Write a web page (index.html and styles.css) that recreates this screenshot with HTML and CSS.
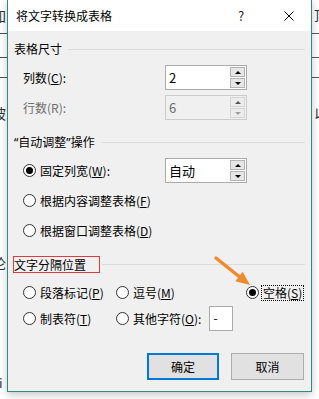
FILE: index.html
```html
<!DOCTYPE html>
<html lang="zh-CN">
<head>
    <meta charset="UTF-8">
    <meta name="viewport" content="width=device-width, initial-scale=1.0">
    <title>将文字转换成表格</title>
    <link rel="stylesheet" href="styles.css">
</head>
<body>
    <!-- document behind the dialog -->
    <div class="doc">
        <div class="doc-line doc-text first"><span class="cut-left">加</span><span class="cut-right">顶</span></div>
        <div class="doc-rule r1"></div>
        <div class="doc-rule r2"></div>
        <div class="doc-rule r3"></div>
        <div class="doc-line doc-text t2"><span class="cut-left">坡</span><span class="cut-right">以</span></div>
        <div class="doc-line doc-text t3"><span class="cut-left">论</span></div>
        <div class="doc-line doc-text t4"><span class="cut-small">i</span></div>
    </div>

    <div class="dialog">
        <div class="titlebar">
            <span class="title">将文字转换成表格</span>
            <span class="help">?</span>
            <svg class="close" width="10" height="10" viewBox="0 0 10 10">
                <path d="M0.5 0.5 L9.5 9.5 M9.5 0.5 L0.5 9.5" stroke="#000" stroke-width="1" fill="none"/>
            </svg>
        </div>

        <div class="content">
            <div class="legend s1">
                <span class="legend-text">表格尺寸</span>
                <span class="legend-line"></span>
            </div>
            <div class="row first">
                <span class="label">列数(<u>C</u>):</span>
                <div class="spin">
                    <span class="spin-value">2</span>
                    <div class="spin-buttons">
                        <span class="spin-btn up"></span>
                        <span class="spin-btn down"></span>
                    </div>
                </div>
            </div>
            <div class="row">
                <span class="label disabled">行数(R):</span>
                <div class="spin is-disabled">
                    <span class="spin-value">6</span>
                    <div class="spin-buttons">
                        <span class="spin-btn up"></span>
                        <span class="spin-btn down"></span>
                    </div>
                </div>
            </div>

            <div class="legend s2">
                <span class="legend-text"><span class="q">“</span>自动调整<span class="q">”</span>操作</span>
                <span class="legend-line"></span>
            </div>
            <div class="row first">
                <span class="label"><span class="radio on"></span>固定列宽(<u>W</u>):</span>
                <div class="spin">
                    <span class="spin-value">自动</span>
                    <div class="spin-buttons">
                        <span class="spin-btn up"></span>
                        <span class="spin-btn down"></span>
                    </div>
                </div>
            </div>
            <div class="row">
                <span class="label"><span class="radio"></span>根据内容调整表格(<u>F</u>)</span>
            </div>
            <div class="row">
                <span class="label"><span class="radio"></span>根据窗口调整表格(<u>D</u>)</span>
            </div>

            <div class="legend s3">
                <span class="legend-text marked">文字分隔位置</span>
                <span class="legend-line"></span>
            </div>
            <div class="row opts first">
                <span class="opt c1"><span class="radio"></span>段落标记(<u>P</u>)</span>
                <span class="opt c2"><span class="radio"></span>逗号(<u>M</u>)</span>
                <span class="opt c3"><span class="radio on"></span><span class="focus">空格(<u>S</u>)</span></span>
            </div>
            <div class="row opts tight">
                <span class="opt c1"><span class="radio"></span>制表符(<u>T</u>)</span>
                <span class="opt c2"><span class="radio"></span>其他字符(<u>O</u>):<span class="char-box">-</span></span>
            </div>

            <div class="buttons">
                <button class="btn default">确定</button>
                <button class="btn">取消</button>
            </div>
        </div>

        <svg class="arrow" width="50" height="40" viewBox="0 0 50 40">
            <line x1="10" y1="7" x2="33" y2="25.5" stroke="#f08a2e" stroke-width="3.5" stroke-linecap="round"/>
            <polygon points="44,34 29.3,30.2 36.7,20.8" fill="#f08a2e"/>
        </svg>
    </div>
</body>
</html>
```

FILE: styles.css
```css
body {
    margin: 0;
    width: 319px;
    height: 399px;
    overflow: hidden;
    position: relative;
    background: #fff;
    font-family: "Noto Sans CJK SC", "Microsoft YaHei", sans-serif;
    font-size: 12px;
    color: #000;
}

/* background document */
.doc {
    height: 399px;
    color: #333;
    font-size: 14px;
}

.doc-line {
    display: flex;
    justify-content: space-between;
    height: 18px;
    line-height: 18px;
}

.doc-text.first {
    padding-top: 6px;
}

.cut-left {
    margin-left: -8px;
}

.cut-right {
    margin-right: -9px;
}

.cut-small {
    margin-left: -1px;
    font-size: 13px;
}

.doc-rule {
    height: 1px;
    background: #555;
}

.doc-rule.r1 { margin-top: 9px; }
.doc-rule.r2 { margin-top: 23px; }
.doc-rule.r3 { margin-top: 19px; }
.doc-line.t2 { margin-top: 26px; }
.doc-line.t3 { margin-top: 132px; }
.doc-line.t4 { margin-top: 102px; }

/* dialog */
.dialog {
    position: absolute;
    left: 7px;
    top: -1px;
    width: 303px;
    height: 391px;
    border: 1px solid #2e8b7a;
    background: #f0f0f0;
    box-shadow: 0 3px 8px rgba(0, 0, 0, 0.22);
}

.titlebar {
    height: 31px;
    background: #fff;
    display: flex;
    align-items: center;
    padding-left: 8px;
}

.title {
    flex: 1;
}

.help {
    width: 10px;
    margin-right: 38px;
    font-size: 13px;
    text-align: center;
    color: #222;
}

.close {
    margin-right: 17px;
}

.content {
    padding: 0 6px;
}

.legend {
    display: flex;
    align-items: center;
    height: 16px;
    line-height: 16px;
}

.legend.s1 { margin-top: 10px; }
.legend.s2 { margin-top: 14px; }
.legend.s3 { margin-top: 13px; height: 17px; }

.legend-text {
    white-space: nowrap;
    margin-right: 6px;
}

.q {
    font-family: "Noto Sans", sans-serif;
}

.legend-text.marked {
    margin-left: -1px;
    padding-right: 13px;
    border: 1px solid #e0393e;
    line-height: 15px;
    margin-right: 2px;
}

.legend-line {
    flex: 1;
    height: 1px;
    background: #dcdcdc;
}

.row {
    display: flex;
    align-items: center;
    height: 25px;
    margin-top: 5px;
    padding-left: 9px;
}

.row.first {
    margin-top: 8px;
}

.s3 + .row.first {
    margin-top: 7px;
}

.row.tight {
    margin-top: 1px;
}

.label {
    width: 142px;
    display: flex;
    align-items: center;
    white-space: nowrap;
}

.label.disabled {
    color: #6d6d6d;
}

.radio {
    position: relative;
    width: 11px;
    height: 11px;
    border: 1px solid #333;
    border-radius: 50%;
    background: #fff;
    margin-right: 4px;
    flex: none;
}

.radio.on::after {
    content: "";
    position: absolute;
    left: 2px;
    top: 2px;
    width: 7px;
    height: 7px;
    border-radius: 50%;
    background: #000;
}

/* spin box */
.spin {
    width: 80px;
    height: 23px;
    border: 1px solid #ababab;
    background: #fff;
    display: flex;
    align-items: center;
}

.spin-value {
    flex: 1;
    padding-left: 3px;
    font-size: 13px;
}

.spin-buttons {
    width: 15px;
    height: 21px;
    margin-right: 1px;
    display: flex;
    flex-direction: column;
    gap: 1px;
}

.spin-btn {
    flex: 1;
    position: relative;
    border: 1px solid #b4b4b4;
    background: #e6e6e6;
}

.spin-btn::after {
    content: "";
    position: absolute;
    left: 4px;
    top: 3px;
    border-left: 3px solid transparent;
    border-right: 3px solid transparent;
}

.spin-btn.up::after {
    border-bottom: 3px solid #000;
}

.spin-btn.down::after {
    border-top: 3px solid #000;
}

.spin.is-disabled {
    border-color: #cccccc;
    background: #f0f0f0;
    color: #6d6d6d;
}

.spin.is-disabled .spin-btn {
    border-color: #d4d4d4;
    background: #ececec;
}

.spin.is-disabled .spin-btn.up::after {
    border-bottom-color: #555;
}

.spin.is-disabled .spin-btn.down::after {
    border-top-color: #a0a0a0;
}

/* separator options */
.opt {
    display: flex;
    align-items: center;
    white-space: nowrap;
}

.opt.c1 { width: 93px; }
.opt.c2 { width: 130px; }

.focus {
    padding: 0 1px;
    line-height: 14px;
    outline: 1px dotted #000;
    margin-left: -1px;
}

.char-box {
    margin-left: 8px;
    border: 1px solid #ababab;
    background: #fff;
    padding-left: 3px;
    box-sizing: border-box;
    width: 24px;
    height: 25px;
    line-height: 21px;
}

/* buttons */
.buttons {
    display: flex;
    justify-content: flex-end;
    gap: 12px;
    margin-top: 22px;
    margin-right: 1px;
}

.btn {
    width: 73px;
    height: 27px;
    border: 1px solid #adadad;
    background: #e1e1e1;
    font-family: inherit;
    font-size: 12px;
    color: #000;
    padding: 0;
}

.btn.default {
    border: 2px solid #0078d7;
    width: 72px;
}

.arrow {
    position: absolute;
    left: 198px;
    top: 251px;
}
```
